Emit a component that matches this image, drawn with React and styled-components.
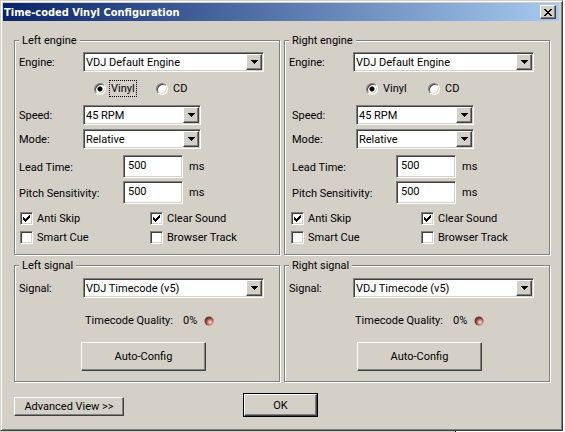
import React, { useId, useState } from 'react';
import styled, { createGlobalStyle, css } from 'styled-components';

const face = '#d4d0c8';
const shadow = '#808080';
const dark = '#404040';

const GlobalStyle = createGlobalStyle`
  * { box-sizing: border-box; }
  body { margin: 0; background: #fff; }
  body, button, input, select {
    font-family: Roboto, "DejaVu Sans Condensed", sans-serif;
    font-size: 11px;
    line-height: 14px;
    color: #000;
  }
`;

const raised = css`
  border: 1px solid;
  border-color: #fff ${dark} ${dark} #fff;
  box-shadow: inset -1px -1px 0 ${shadow};
`;

const sunken = css`
  border: 1px solid;
  border-color: ${shadow} #fff #fff ${shadow};
  box-shadow: inset 1px 1px 0 ${dark}, inset -1px -1px 0 ${face};
`;

const Page = styled.div`
  padding-right: 2px;
`;

const Dialog = styled.main`
  background: ${face};
  border: 1px solid;
  border-color: ${face} ${dark} ${dark} ${face};
  box-shadow: inset 1px 1px 0 #fff, inset -1px -1px 0 ${shadow};
  padding: 2px;
`;

const TitleBar = styled.header`
  display: flex;
  align-items: center;
  justify-content: space-between;
  height: 18px;
  padding: 0 3px 0 1px;
  margin-right: 1px;
  background: linear-gradient(to right, #0a246a, #a6caf0);
`;

const Title = styled.h1`
  margin: 0;
  padding-top: 2px;
  font-family: "DejaVu Sans Condensed", sans-serif;
  font-size: 11px;
  line-height: 14px;
  font-weight: bold;
  color: #fff;
`;

const CloseButton = styled.button`
  ${raised}
  display: flex;
  align-items: center;
  justify-content: center;
  width: 16px;
  height: 14px;
  padding: 0;
  background: ${face};
`;

const Content = styled.div`
  padding: 11px 10px 12px 11px;
`;

const Groups = styled.div`
  display: grid;
  grid-template-columns: 1fr 1fr;
  gap: 2px 4px;
`;

const Group = styled.fieldset`
  min-width: 0;
  margin: 0;
  padding: ${(p) => p.$top}px 15px ${(p) => p.$bottom}px 4px;
  border: 1px solid ${shadow};
  box-shadow: 1px 1px 0 #fff, inset 1px 1px 0 #fff;
`;

const Legend = styled.legend`
  padding: 2px 3px 0;
  background: ${face};
`;

const Field = styled.div`
  display: grid;
  grid-template-columns: ${(p) => p.$label}px ${(p) => (p.$control ? `${p.$control}px` : '1fr')} auto;
  justify-content: start;
  align-items: center;
  padding-left: ${(p) => p.$indent || 0}px;
  margin-bottom: ${(p) => p.$after || 0}px;
`;

const FieldLabel = styled.label`
  padding-top: 2px;
`;

const SelectWrap = styled.div`
  position: relative;
  height: 20px;
`;

const Select = styled.select`
  ${sunken}
  appearance: none;
  display: block;
  width: 100%;
  height: 20px;
  padding: 1px 20px 0 2px;
  border-radius: 0;
  background: #fff;
`;

const Arrow = styled.span`
  ${raised}
  position: absolute;
  top: 2px;
  right: 2px;
  display: flex;
  align-items: center;
  justify-content: center;
  width: 16px;
  height: 16px;
  background: ${face};
  pointer-events: none;
`;

const TextInput = styled.input`
  ${sunken}
  width: 100%;
  height: 23px;
  padding: 0 4px 3px;
  border-radius: 0;
  background: #fff;
`;

const Unit = styled.span`
  padding: 1px 0 0 6px;
`;

const Radios = styled.div`
  display: grid;
  grid-template-columns: 62px auto;
  justify-content: start;
  align-items: center;
  height: 33px;
  padding-left: ${(p) => p.$indent}px;
`;

const Choice = styled.label`
  display: flex;
  align-items: center;
  gap: 4px;
`;

const Radio = styled.input`
  ${sunken}
  appearance: none;
  width: 12px;
  height: 12px;
  margin: 0;
  border-radius: 50%;
  background: #fff;
  &:checked {
    background: radial-gradient(circle, #000 2px, #fff 3px);
  }
`;

const RadioText = styled.span`
  padding: 1px 1px 0;
  outline: ${(p) => (p.$focused ? '1px dotted #000' : 'none')};
`;

const Checks = styled.div`
  display: grid;
  grid-template-columns: ${(p) => p.$column}px auto;
  grid-auto-rows: 19px;
  justify-content: start;
  align-items: center;
  padding-left: ${(p) => p.$indent}px;
`;

const CheckBox = styled.span`
  display: grid;
  width: 13px;
  height: 13px;
  & > * { grid-area: 1 / 1; }
  svg { visibility: hidden; pointer-events: none; }
  input:checked + svg { visibility: visible; }
`;

const CheckInput = styled.input`
  ${sunken}
  appearance: none;
  width: 13px;
  height: 13px;
  margin: 0;
  background: #fff;
`;

const CheckText = styled.span`
  padding-top: 1px;
`;

const Quality = styled.div`
  display: flex;
  align-items: center;
  height: 44px;
  padding: 2px 0 0 ${(p) => p.$indent}px;
`;

const Percent = styled.output`
  margin: 0 7px 0 10px;
`;

const Button = styled.button`
  ${raised}
  height: ${(p) => p.$height}px;
  min-width: ${(p) => p.$width}px;
  margin-left: ${(p) => p.$indent || 0}px;
  padding: 1px 0 0;
  background: ${face};
  outline: ${(p) => (p.$primary ? '1px solid #000' : 'none')};
`;

const Footer = styled.footer`
  display: grid;
  grid-template-columns: 1fr auto 1fr;
  align-items: end;
  justify-items: start;
  padding: 12px 3px 0 0;
`;

const Behind = styled.div`
  height: 1px;
  width: 81%;
  border-right: 1px solid #000;
  background: ${face};
`;

function Dropdown({ id, value }) {
  return (
    <SelectWrap>
      <Select id={id} defaultValue={value}>
        <option>{value}</option>
      </Select>
      <Arrow aria-hidden="true">
        <svg width="7" height="4" shapeRendering="crispEdges">
          <path d="M0 0h7v1h-1v1h-1v1h-1v1h-1v-1h-1v-1h-1v-1h-1z" />
        </svg>
      </Arrow>
    </SelectWrap>
  );
}

function Check({ label, checked }) {
  return (
    <Choice>
      <CheckBox>
        <CheckInput type="checkbox" defaultChecked={checked} />
        <svg width="13" height="13" shapeRendering="crispEdges">
          <path d="M3 5h1v1h1v1h1v-1h1v-1h1v-1h1v-1h1v3h-1v1h-1v1h-1v1h-1v1h-1v-1h-1v-1h-1z" />
        </svg>
      </CheckBox>
      <CheckText>{label}</CheckText>
    </Choice>
  );
}

function Led() {
  const id = useId();
  return (
    <svg width="10" height="10" viewBox="0 0 10 10" aria-hidden="true">
      <defs>
        <radialGradient id={id} cx="0.62" cy="0.64" r="0.6">
          <stop offset="0" stopColor="#fff0ea" />
          <stop offset="0.35" stopColor="#dc9488" />
          <stop offset="0.75" stopColor="#8a3a34" />
          <stop offset="1" stopColor="#5c3a38" />
        </radialGradient>
      </defs>
      <circle cx="5" cy="5" r="4.5" fill={`url(#${id})`} />
    </svg>
  );
}

function Engine({ title, layout, focused }) {
  const id = useId();
  const [medium, setMedium] = useState('Vinyl');
  return (
    <Group $top={4} $bottom={7}>
      <Legend>{title}</Legend>
      <Field $label={64}>
        <FieldLabel htmlFor={`${id}e`}>Engine:</FieldLabel>
        <Dropdown id={`${id}e`} value="VDJ Default Engine" />
      </Field>
      <Radios $indent={layout.radio}>
        {['Vinyl', 'CD'].map((name) => (
          <Choice key={name}>
            <Radio type="radio" name={id} checked={medium === name} onChange={() => setMedium(name)} />
            <RadioText $focused={focused && name === 'Vinyl'}>{name}</RadioText>
          </Choice>
        ))}
      </Radios>
      <Field $label={64} $indent={layout.indent} $control={118} $after={4}>
        <FieldLabel htmlFor={`${id}s`}>Speed:</FieldLabel>
        <Dropdown id={`${id}s`} value="45 RPM" />
      </Field>
      <Field $label={64} $indent={layout.indent} $control={118} $after={6}>
        <FieldLabel htmlFor={`${id}m`}>Mode:</FieldLabel>
        <Dropdown id={`${id}m`} value="Relative" />
      </Field>
      <Field $label={104} $indent={layout.indent} $control={60} $after={3}>
        <FieldLabel htmlFor={`${id}l`}>Lead Time:</FieldLabel>
        <TextInput id={`${id}l`} defaultValue="500" />
        <Unit>ms</Unit>
      </Field>
      <Field $label={104} $indent={layout.indent} $control={60} $after={5}>
        <FieldLabel htmlFor={`${id}p`}>Pitch Sensitivity:</FieldLabel>
        <TextInput id={`${id}p`} defaultValue="500" />
        <Unit>ms</Unit>
      </Field>
      <Checks $indent={layout.check} $column={130}>
        <Check label="Anti Skip" checked />
        <Check label="Clear Sound" checked />
        <Check label="Smart Cue" />
        <Check label="Browser Track" />
      </Checks>
    </Group>
  );
}

function Signal({ title, layout }) {
  const id = useId();
  return (
    <Group $top={5} $bottom={10}>
      <Legend>{title}</Legend>
      <Field $label={64}>
        <FieldLabel htmlFor={id}>Signal:</FieldLabel>
        <Dropdown id={id} value="VDJ Timecode (v5)" />
      </Field>
      <Quality $indent={66}>
        Timecode Quality:
        <Percent>0%</Percent>
        <Led />
      </Quality>
      <Button type="button" $width={125} $height={29} $indent={layout.button}>Auto-Config</Button>
    </Group>
  );
}

const left = { indent: 0, radio: 75, check: 1, button: 62 };
const right = { indent: 3, radio: 77, check: 2, button: 68 };

export default function App() {
  return (
    <Page>
      <GlobalStyle />
      <Dialog>
        <TitleBar>
          <Title>Time-coded Vinyl Configuration</Title>
          <CloseButton type="button" aria-label="Close">
            <svg width="8" height="7" shapeRendering="crispEdges">
              <path d="M0 0h2v1h1v1h2v-1h1v-1h2v1h-1v1h-1v1h-1v1h1v1h1v1h1v1h-2v-1h-1v-1h-2v1h-1v1h-2v-1h1v-1h1v-1h1v-1h-1v-1h-1v-1h-1z" />
            </svg>
          </CloseButton>
        </TitleBar>
        <Content>
          <Groups>
            <Engine title="Left engine" layout={left} focused />
            <Engine title="Right engine" layout={right} />
            <Signal title="Left signal" layout={left} />
            <Signal title="Right signal" layout={right} />
          </Groups>
          <Footer>
            <Button type="button" $width={110} $height={19}>Advanced View &gt;&gt;</Button>
            <Button type="button" $width={73} $height={22} $primary>OK</Button>
          </Footer>
        </Content>
      </Dialog>
      <Behind />
    </Page>
  );
}
